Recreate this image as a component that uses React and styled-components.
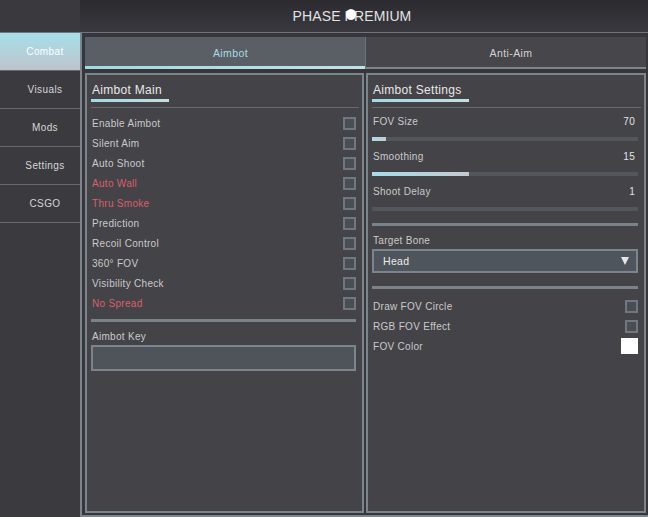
import React from "react";
import styled, { createGlobalStyle } from "styled-components";

const GlobalStyle = createGlobalStyle`
  html, body, #root {
    height: 100%;
  }
  body {
    margin: 0;
    overflow: hidden;
    background: #3b3a3f;
    font-family: "Liberation Sans", Arial, sans-serif;
  }
  * {
    box-sizing: border-box;
  }
`;

const navItems = ["Combat", "Visuals", "Mods", "Settings", "CSGO"];

const toggles = [
  { label: "Enable Aimbot" },
  { label: "Silent Aim" },
  { label: "Auto Shoot" },
  { label: "Auto Wall", danger: true },
  { label: "Thru Smoke", danger: true },
  { label: "Prediction" },
  { label: "Recoil Control" },
  { label: "360° FOV" },
  { label: "Visibility Check" },
  { label: "No Spread", danger: true },
];

const sliders = [
  { label: "FOV Size", value: 70, fill: 5.3 },
  { label: "Smoothing", value: 15, fill: 36.5 },
  { label: "Shoot Delay", value: 1, fill: 0 },
];

const App = () => {
  return (
    <Shell>
      <GlobalStyle />
      <Header>
        <HeaderCorner />
        <TitleBar>
          PHASE PREMIUM
          <Cursor />
        </TitleBar>
      </Header>
      <Body>
        <Sidebar>
          {navItems.map((item, i) => (
            <NavItem key={item} $active={i === 0}>
              {item}
            </NavItem>
          ))}
        </Sidebar>
        <Main>
          <Tabs>
            <Tab $active>Aimbot</Tab>
            <Tab>Anti-Aim</Tab>
          </Tabs>
          <Panels>
            <Panel $width="279px">
              <SectionTitle>Aimbot Main</SectionTitle>
              <ThinRule />
              {toggles.map((t) => (
                <Row key={t.label} $danger={t.danger}>
                  {t.label}
                  <Checkbox />
                </Row>
              ))}
              <ThickRule $mt="6px" />
              <FieldLabel $mt="6px">Aimbot Key</FieldLabel>
              <KeyInput />
            </Panel>
            <Panel>
              <SectionTitle>Aimbot Settings</SectionTitle>
              <ThinRule />
              {sliders.map((s) => (
                <SliderBlock key={s.label}>
                  <SliderHead>
                    <span>{s.label}</span>
                    <span>{s.value}</span>
                  </SliderHead>
                  <Track>
                    <Fill style={{ width: `${s.fill}%` }} />
                  </Track>
                </SliderBlock>
              ))}
              <ThickRule $mt="5px" />
              <FieldLabel $mt="6px">Target Bone</FieldLabel>
              <Select>
                Head
                <Arrow />
              </Select>
              <ThickRule $mt="13px" />
              <Row $mt="7px">
                Draw FOV Circle
                <Checkbox />
              </Row>
              <Row>
                RGB FOV Effect
                <Checkbox />
              </Row>
              <Row>
                FOV Color
                <Swatch />
              </Row>
            </Panel>
          </Panels>
        </Main>
      </Body>
    </Shell>
  );
};

const Shell = styled.div`
  height: 100vh;
  display: flex;
  flex-direction: column;
`;

const Header = styled.div`
  height: 33px;
  flex-shrink: 0;
  display: flex;
  border-bottom: 1px solid #6f757c;
`;

const HeaderCorner = styled.div`
  width: 80px;
  background: #3a393e;
`;

const TitleBar = styled.div`
  flex: 1;
  position: relative;
  display: flex;
  align-items: center;
  justify-content: center;
  padding-right: 24px;
  background: linear-gradient(#2b2a2f, #3a393f);
  color: #e2e2e2;
  font-size: 14px;
  letter-spacing: 0.1px;
`;

const Cursor = styled.span`
  position: absolute;
  left: 266px;
  top: 9px;
  width: 10px;
  height: 11px;
  border-radius: 50%;
  background: #fff;
`;

const Body = styled.div`
  flex: 1;
  min-height: 0;
  display: flex;
`;

const Sidebar = styled.div`
  flex: 0 0 80px;
  background: #3b3a3f;
`;

const NavItem = styled.div`
  height: 38px;
  display: flex;
  align-items: center;
  justify-content: center;
  padding-left: 10px;
  border-bottom: 1px solid #68696d;
  font-size: 10px;
  letter-spacing: 0.4px;
  color: ${(p) => (p.$active ? "#ffffff" : "#d6d6d6")};
  background: ${(p) =>
    p.$active ? "linear-gradient(#a6dfea, #bdc4cb)" : "transparent"};
`;

const Main = styled.div`
  flex: 1;
  display: flex;
  flex-direction: column;
  gap: 4px;
  padding: 4px 2px 2px 3px;
  background: #37363b;
  border-left: 2px solid #7d858c;
  border-bottom: 2px solid #7d858c;
`;

const Tabs = styled.div`
  display: flex;
  height: 32px;
`;

const Tab = styled.div`
  flex: ${(p) => (p.$active ? "0 0 281px" : "1")};
  display: flex;
  align-items: center;
  justify-content: center;
  padding-left: 10px;
  font-size: 10.5px;
  letter-spacing: 0.4px;
  color: ${(p) => (p.$active ? "#a8dce5" : "#d2d2d2")};
  background: ${(p) =>
    p.$active
      ? "linear-gradient(to right, #a2d9e3, #c2e2e8) bottom / 100% 3px no-repeat, #5a5f66"
      : "#46464b"};
  box-shadow: ${(p) =>
    p.$active ? "inset -1px 0 0 #6d737a" : "inset 0 -2px 0 #7d858c"};
`;

const Panels = styled.div`
  flex: 1;
  min-height: 0;
  display: flex;
  gap: 2px;
`;

const Panel = styled.div`
  flex: ${(p) => (p.$width ? `0 0 ${p.$width}` : "1")};
  display: flex;
  flex-direction: column;
  padding: 0 6px 0 4px;
  background: #444348;
  border: 2px solid #7d858c;
`;

const SectionTitle = styled.div`
  align-self: flex-start;
  margin-top: 8px;
  padding: 0 7px 2px 1px;
  line-height: 14px;
  font-size: 12px;
  letter-spacing: 0.3px;
  color: #e8e8e8;
  border-bottom: 3px solid #a6dbe4;
  border-image: linear-gradient(to right, #a3d9e3, #c6dde2) 1;
`;

const ThinRule = styled.div`
  height: 1px;
  margin: 5px -3px 5px 0;
  background: #67696e;
`;

const ThickRule = styled.div`
  height: 3px;
  margin-top: ${(p) => p.$mt || "0"};
  background: #7b838a;
`;

const Row = styled.div`
  height: 20px;
  margin-top: ${(p) => p.$mt || "0"};
  display: flex;
  align-items: center;
  justify-content: space-between;
  padding-left: 1px;
  font-size: 10px;
  letter-spacing: 0.3px;
  color: ${(p) => (p.$danger ? "#d8606d" : "#cacaca")};
`;

const Checkbox = styled.span`
  width: 13px;
  height: 13px;
  border: 2px solid #6f787f;
  background: #4a4e54;
`;

const Swatch = styled.span`
  width: 17px;
  height: 16px;
  background: #ffffff;
`;

const FieldLabel = styled.div`
  height: 16px;
  margin-top: ${(p) => p.$mt || "0"};
  display: flex;
  align-items: center;
  padding-left: 1px;
  font-size: 10px;
  letter-spacing: 0.3px;
  color: #cacaca;
`;

const KeyInput = styled.div`
  height: 26px;
  margin-top: 1px;
  border: 2px solid #7d858c;
  background: #4f545b;
`;

const SliderBlock = styled.div`
  display: flex;
  flex-direction: column;
  margin-bottom: 7px;
`;

const SliderHead = styled.div`
  height: 16px;
  display: flex;
  align-items: center;
  justify-content: space-between;
  padding: 0 3px 0 1px;
  font-size: 10px;
  letter-spacing: 0.3px;
  color: #cacaca;

  span:last-child {
    color: #e4e4e4;
  }
`;

const Track = styled.div`
  height: 4px;
  margin-top: 8px;
  background: #53575d;
`;

const Fill = styled.div`
  height: 100%;
  background: linear-gradient(to right, #a6dde7, #c4cbd1);
`;

const Select = styled.div`
  height: 24px;
  margin-top: 1px;
  display: flex;
  align-items: center;
  justify-content: space-between;
  padding: 0 7px 0 9px;
  border: 2px solid #7d858c;
  background: #4f555c;
  font-size: 10.5px;
  letter-spacing: 0.3px;
  color: #ececec;
`;

const Arrow = styled.span`
  width: 0;
  height: 0;
  border-left: 4.5px solid transparent;
  border-right: 4.5px solid transparent;
  border-top: 8px solid #e6e6e6;
`;

export default App;
